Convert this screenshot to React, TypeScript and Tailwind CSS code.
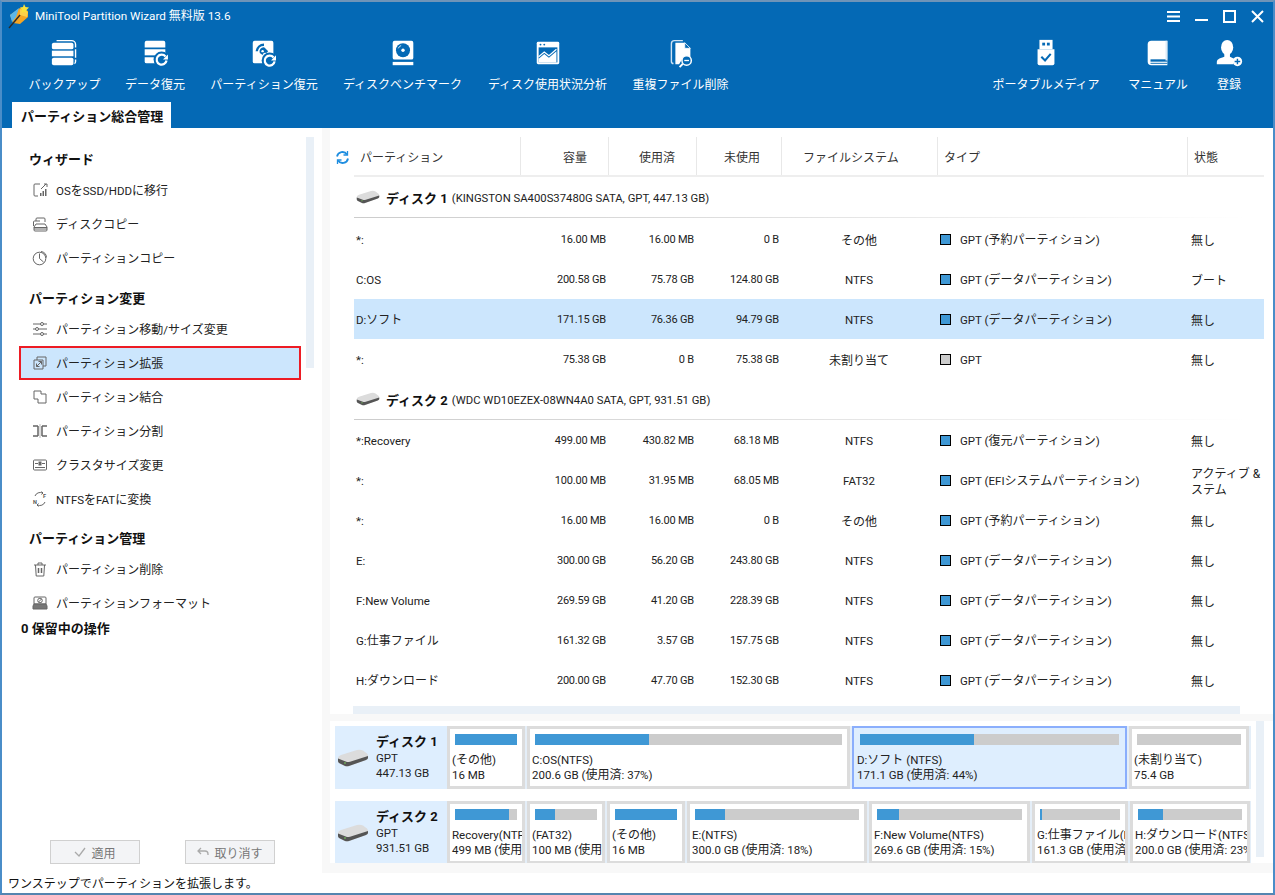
import type { ReactNode } from 'react';

// latin runs render smaller than the kana next to them, same as the app does
function Mixed({ text, latin = 'text-[11.5px]' }: { text: string; latin?: string }) {
  const parts = text.split(/([\x20-\x7e]+)/).filter(Boolean);
  return (
    <>
      {parts.map((p, i) => (/^[\x20-\x7e]+$/.test(p) ? <span key={i} className={latin}>{p}</span> : <span key={i}>{p}</span>))}
    </>
  );
}

function Logo() {
  return (
    <svg width="24" height="26" viewBox="0 0 24 26">
      <path d="M2 12 L12 5 L20 8 L20 14 L12 21 L5 20 Z" fill="#f6a623" />
      <path d="M2 12 L11 5 L8 14 L4 19 Z" fill="#5bb7e8" />
      <path d="M12 6 L20 9 L19 14 L12 12 Z" fill="#fbd04a" />
      <path d="M16 1 L17.500 4 L21 4.500 L18.500 7 L19 10 L16 8.500 L13.500 10 L14 7 L12 4.500 L15 4 Z" fill="#f8e23c" />
      <path d="M1 25 L12 12" stroke="#2a2a2a" strokeWidth="1.400" />
    </svg>
  );
}

const CArc = ({ cx = 22, cy = 23 }: { cx?: number; cy?: number }) => (
  <g transform={`translate(${cx} ${cy})`}>
    <circle r="8.500" fill="#0469b5" />
    <path d="M4.200 -3.200A5.300 5.300 0 1 0 5.300 1" fill="none" stroke="#fff" strokeWidth="2.400" />
    <path d="M6.800 -5.500V0H1.500z" fill="#fff" />
  </g>
);

const toolIcons: Record<string, ReactNode> = {
  backup: (
    <g fill="#fff">
      <rect x="2" y="5" width="23" height="7" rx="2" />
      <rect x="2" y="13.500" width="23" height="6" />
      <rect x="2" y="21" width="23" height="8" rx="2" />
      <path d="M7 2h16a5 5 0 0 1 5 5v3h-1.500V7A3.500 3.500 0 0 0 23 3.500H7zM26.500 12H28v9h-1.500zM26.500 23H28v2a3 3 0 0 1-2 3v-1.500a1.500 1.500 0 0 0 .5-1.500z" />
    </g>
  ),
  data: (
    <g fill="#fff">
      <path d="M7 3h18a2 2 0 0 1 2 2v5H5V5a2 2 0 0 1 2-2z" />
      <rect x="5" y="12" width="22" height="6.500" />
      <path d="M5 20.500h12V27H7a2 2 0 0 1-2-2z" />
      <CArc cx={23} cy={23} />
    </g>
  ),
  part: (
    <g>
      <rect x="4" y="3" width="22" height="24" rx="2" fill="#fff" />
      <path d="M7 14a9 9 0 0 1 9-8v2.500a6.500 6.500 0 0 0-6.500 5.500z" fill="#0469b5" />
      <path d="M11.500 16a4.500 4.500 0 0 1 5-6l4 4-2 2a3 3 0 0 0-4 2z" fill="#0469b5" />
      <circle cx="14.500" cy="14" r="1.300" fill="#fff" />
      <CArc cx={22} cy={24} />
    </g>
  ),
  bench: (
    <g>
      <rect x="5" y="3" width="22" height="20" rx="2" fill="#fff" />
      <circle cx="16" cy="13" r="7.500" fill="#0469b5" />
      <circle cx="16" cy="13" r="1.800" fill="#fff" />
      <path d="M11 11a5.500 5.500 0 0 1 3-3" stroke="#fff" strokeWidth=".9" fill="none" />
      <rect x="5" y="25.500" width="22" height="3.500" fill="#fff" />
    </g>
  ),
  usage: (
    <g>
      <rect x="4" y="4" width="24" height="24" rx="1.500" fill="#fff" />
      <rect x="6" y="10" width="20" height="16" fill="#0469b5" />
      <circle cx="8" cy="7" r="1" fill="#0469b5" />
      <circle cx="12" cy="7" r="1" fill="#0469b5" />
      <path d="M6 22 L12 17 L17 21 L25 14 V26 H6 Z" fill="#fff" />
      <path d="M6 20 L12 15 L17 19 L25 12" fill="none" stroke="#fff" strokeWidth="1.300" />
    </g>
  ),
  dup: (
    <g>
      <path d="M8 28a3 3 0 0 1-3-3V6a4 4 0 0 1 4-4h9v1.500H9A2.500 2.500 0 0 0 6.500 6v19A1.500 1.500 0 0 0 8 26.500z" fill="#cfe3f4" />
      <path d="M10 5h10l6 6v10h-8l-4 7h-4z" fill="#fff" />
      <path d="M20 5v6h6z" fill="#0469b5" stroke="#fff" strokeWidth=".8" />
      <circle cx="22" cy="24" r="5" fill="#0469b5" stroke="#fff" strokeWidth="1.600" />
      <rect x="19.500" y="23.300" width="5" height="1.400" fill="#fff" />
      <path d="M18 27.500 L14.500 31" stroke="#fff" strokeWidth="2" />
    </g>
  ),
  usb: (
    <g>
      <path d="M9 2h14v10H9z" fill="#fff" />
      <rect x="12" y="5" width="3" height="3" fill="#0469b5" />
      <rect x="17" y="5" width="3" height="3" fill="#0469b5" />
      <path d="M7 12h18v15a2 2 0 0 1-2 2H9a2 2 0 0 1-2-2z" fill="#fff" />
      <path d="M11 20l4 4 6-7" fill="none" stroke="#0469b5" strokeWidth="2.200" />
    </g>
  ),
  book: (
    <g>
      <path d="M9 3h17v26H9a4 4 0 0 1-4-4V7a4 4 0 0 1 4-4z" fill="#fff" />
      <path d="M8 24h18" stroke="#0469b5" strokeWidth="2.500" />
      <path d="M8 27h18" stroke="#0469b5" strokeWidth="1" />
      <path d="M24 3h2v21h-2z" fill="#dcebf7" />
    </g>
  ),
  user: (
    <g>
      <ellipse cx="14" cy="10" rx="6.500" ry="8" fill="#fff" />
      <path d="M11 17h6v3l5 2.500a5 5 0 0 0-1 5.500H3v-2c0-3 2-4 8-6z" fill="#fff" />
      <circle cx="25" cy="25" r="5" fill="#fff" />
      <path d="M25 22v6M22 25h6" stroke="#0469b5" strokeWidth="1.500" />
    </g>
  ),
};

function ToolItem({ icon, label, width }: { icon: string; label: string; width: string }) {
  return (
    <div className={`flex flex-col items-center ${width}`}>
      <svg width="30" height="30" viewBox="0 0 32 32" className="shrink-0">{toolIcons[icon]}</svg>
      <span className="mt-[8px] text-[12px] leading-[18px] text-white whitespace-nowrap">{label}</span>
    </div>
  );
}

const sideIcons: Record<string, ReactNode> = {
  migrate: (
    <g>
      <path d="M8 2H3a1 1 0 0 0-1 1v10a1 1 0 0 0 1 1h3M12 2h3v3" />
      <path d="M9 7l5-5" />
      <path d="M8 14v-3h1.500v3zM10.500 14V9H12v5zM13 14V7h1.500v7z" fill="#666" stroke="none" />
    </g>
  ),
  disk: (
    <g>
      <path d="M4 5V3a1 1 0 0 1 1-1h7a1 1 0 0 1 1 1v3" />
      <path d="M1.500 10V6a1 1 0 0 1 1-1H8" />
      <path d="M4 8h9l2 3v3a1 1 0 0 1-1 1H3a1 1 0 0 1-1-1v-3z" />
      <path d="M2 11.500h13M2 13h13" />
    </g>
  ),
  partcopy: (
    <g>
      <circle cx="7.500" cy="8.500" r="6.300" />
      <path d="M7.500 3.500v5l4 3.500" />
      <path d="M9 1.500a6.500 6.500 0 0 1 5.500 6" />
    </g>
  ),
  sliders: (
    <g>
      <path d="M1 3h14M1 8h14M1 13h14" />
      <circle cx="10" cy="3" r="1.500" fill="#fff" />
      <circle cx="5" cy="8" r="1.500" fill="#fff" />
      <circle cx="10" cy="13" r="1.500" fill="#fff" />
    </g>
  ),
  extend: (
    <g>
      <path d="M5 5V2h9v9h-3" />
      <path d="M2 5h9v9H2z" />
      <path d="M4.500 11.500l5-5M6.500 6.500h3v3M4.500 8.500v3h3" />
    </g>
  ),
  merge: <path d="M2 2h7v3h5v9H6v-4H2z" />,
  split: (
    <g>
      <path d="M1 3h5M1 13h5M10 3h5M10 13h5" strokeWidth="1.500" />
      <path d="M6 3v10M10 3v10" strokeWidth="1.500" />
      <path d="M8 1v14" stroke="#bbb" />
    </g>
  ),
  cluster: (
    <g>
      <rect x="1.500" y="3" width="13" height="10" rx="1" />
      <path d="M3 10.500h10" />
      <path d="M3 6.500h3M10 6.500h3" />
      <rect x="7" y="5" width="2" height="3" fill="#666" />
    </g>
  ),
  convert: (
    <g>
      <path d="M3 5a5.500 5.500 0 0 1 7.500-3M13 11a5.500 5.500 0 0 1-7.500 3" />
      <path d="M9.500 .5l1.500 1.500-1.500 1.500M6.500 12.500L5 14l1.500 1.500" />
      <text x="11" y="6.500" fontSize="5.500" fontWeight="700" fill="#555" stroke="none">F</text>
      <text x="1" y="13" fontSize="5.500" fontWeight="700" fill="#555" stroke="none">N</text>
    </g>
  ),
  trash: (
    <g>
      <path d="M2 4h12M6 4V2h4v2M3.500 4l.7 11h7.600l.7-11" />
      <path d="M6.500 7v5M9.500 7v5" strokeWidth="1.500" />
    </g>
  ),
  format: (
    <g>
      <path d="M3 2h10a1 1 0 0 1 1 1v6H2V3a1 1 0 0 1 1-1z" />
      <circle cx="8" cy="5.500" r="2.300" />
      <path d="M6.500 7l3-3" />
      <path d="M2 9L1 11v3h14v-3l-1-2z" fill="#777" />
    </g>
  ),
};

function SideItem({ icon, label, active }: { icon: string; label: string; active?: boolean }) {
  return (
    <div
      className={`flex h-[34px] items-center text-[12px] text-[#222] ${
        active ? 'ml-[17px] mr-[21px] border-2 border-[#ed1c24] bg-[#cce6fd] pl-[11px]' : 'pl-[30px]'
      }`}
    >
      <svg width="16" height="16" viewBox="0 0 16 16" fill="none" stroke="#666" strokeWidth="1" className="mr-[8px] shrink-0">
        {sideIcons[icon]}
      </svg>
      <span className="pt-[2px] whitespace-nowrap"><Mixed text={label} /></span>
    </div>
  );
}

function SideHeading({ children, className = '' }: { children: ReactNode; className?: string }) {
  return <div className={`flex h-[28px] items-center pl-[27px] pt-[1px] text-[13px] font-bold text-[#111] ${className}`}>{children}</div>;
}

function DiskIcon({ width = 24, height = 14 }: { width?: number; height?: number }) {
  return (
    <svg width={width} height={height} viewBox="0 0 32 18" className="shrink-0">
      <path d="M1 9Q1 7 4 6L20 1Q23 .2 26 1.500L30 4.500Q31.500 6 31 8V9Q31 10 29 11L12 17Q10 17.600 8 17L2 14Q1 13 1 12Z" fill="#dcdcdc" />
      <path d="M1 9.500L10 13Q11 13.300 13 12.800L31 7V9Q31 10 29 11L12 17Q10 17.600 8 17L2 14Q1 13 1 12Z" fill="#555" />
      <circle cx="8" cy="14" r=".8" fill="#7ddc5a" />
    </svg>
  );
}

const COLS = 'grid grid-cols-[166px_88px_88px_85px_156px_250px_77px]';
const NUM = 'pr-[2px] text-right text-[11px] tracking-[-0.2px]';

type Row = { name: string; size: string; used: string; free: string; fs: string; type: string; status: ReactNode; selected?: boolean; gray?: boolean };

function TableRow({ row }: { row: Row }) {
  return (
    <div className="flex">
      <div className="w-[24px]" />
      <div className={`${COLS} h-[40px] items-center pt-[3px] text-[12px] text-[#222] ${row.selected ? 'bg-[#cce6fd]' : ''}`}>
        <div className="pl-[2px] whitespace-nowrap"><Mixed text={row.name} /></div>
        <div className={NUM}>{row.size}</div>
        <div className={NUM}>{row.used}</div>
        <div className={NUM}>{row.free}</div>
        <div className="text-center"><Mixed text={row.fs} /></div>
        <div className="flex items-center pl-[3px]">
          <span className={`mb-[3px] mr-[9px] h-[11px] w-[11px] border border-black ${row.gray ? 'bg-[#cccccc]' : 'bg-[#3f98d5]'}`} />
          <span className="whitespace-nowrap"><Mixed text={row.type} /></span>
        </div>
        <div className="pl-[4px] leading-[16px] whitespace-nowrap">{row.status}</div>
      </div>
    </div>
  );
}

function DiskHeader({ n, info }: { n: number; info: string }) {
  return (
    <div className="flex">
      <div className="w-[24px]" />
      <div className="w-[893px]">
        <div className="flex h-[40px] items-center pl-[2px]">
          <DiskIcon />
          <span className="ml-[6px] pt-[4px] text-[13px] font-bold whitespace-nowrap text-[#111]">ディスク {n}</span>
          <span className="ml-[4px] pt-[4px] text-[11.3px] whitespace-nowrap text-[#222]">{info}</span>
        </div>
        <div className="h-px bg-gradient-to-r from-[#cccccc] via-[#e2e2e2] to-transparent" />
      </div>
    </div>
  );
}

const disk1: Row[] = [
  { name: '*:', size: '16.00 MB', used: '16.00 MB', free: '0 B', fs: 'その他', type: 'GPT (予約パーティション)', status: '無し' },
  { name: 'C:OS', size: '200.58 GB', used: '75.78 GB', free: '124.80 GB', fs: 'NTFS', type: 'GPT (データパーティション)', status: 'ブート' },
  { name: 'D:ソフト', size: '171.15 GB', used: '76.36 GB', free: '94.79 GB', fs: 'NTFS', type: 'GPT (データパーティション)', status: '無し', selected: true },
  { name: '*:', size: '75.38 GB', used: '0 B', free: '75.38 GB', fs: '未割り当て', type: 'GPT', status: '無し', gray: true },
];

const disk2: Row[] = [
  { name: '*:Recovery', size: '499.00 MB', used: '430.82 MB', free: '68.18 MB', fs: 'NTFS', type: 'GPT (復元パーティション)', status: '無し' },
  { name: '*:', size: '100.00 MB', used: '31.95 MB', free: '68.05 MB', fs: 'FAT32', type: 'GPT (EFIシステムパーティション)', status: <>アクティブ &amp;<br />ステム</> },
  { name: '*:', size: '16.00 MB', used: '16.00 MB', free: '0 B', fs: 'その他', type: 'GPT (予約パーティション)', status: '無し' },
  { name: 'E:', size: '300.00 GB', used: '56.20 GB', free: '243.80 GB', fs: 'NTFS', type: 'GPT (データパーティション)', status: '無し' },
  { name: 'F:New Volume', size: '269.59 GB', used: '41.20 GB', free: '228.39 GB', fs: 'NTFS', type: 'GPT (データパーティション)', status: '無し' },
  { name: 'G:仕事ファイル', size: '161.32 GB', used: '3.57 GB', free: '157.75 GB', fs: 'NTFS', type: 'GPT (データパーティション)', status: '無し' },
  { name: 'H:ダウンロード', size: '200.00 GB', used: '47.70 GB', free: '152.30 GB', fs: 'NTFS', type: 'GPT (データパーティション)', status: '無し' },
];

function PartBox({ width, pct, line1, line2, selected }: { width: string; pct: number; line1: string; line2: string; selected?: boolean }) {
  return (
    <div
      className={`shrink-0 overflow-hidden ${width} ${
        selected ? 'border-[2px] border-[#8aaefc] bg-[#deeefe] pt-[6px]' : 'border-[3px] border-[#dcdcdc] bg-white pt-[5px]'
      }`}
    >
      <div className={`h-[11px] bg-[#cccccc] ${selected ? 'mx-[6px]' : 'mx-[5px]'}`}>
        <div className="h-full bg-[#3f98d5]" style={{ width: `${pct}%` }} />
      </div>
      <div className={`mt-[8px] text-[12px] leading-[15px] whitespace-nowrap text-[#222] ${selected ? 'pl-[3px]' : 'pl-[2px]'}`}>
        <Mixed text={line1} />
        <br />
        <Mixed text={line2} />
      </div>
    </div>
  );
}

function DiskBlock({ n, size, children, className = '' }: { n: number; size: string; children: ReactNode; className?: string }) {
  return (
    <div className={`flex h-[63px] w-[916px] bg-[#e4eef8] ${className}`}>
      <div className="flex w-[112px] shrink-0 items-center rounded-l-[3px] bg-[#deeefe] pl-[2px]">
        <DiskIcon width={32} height={18} />
        <div className="ml-[7px] text-[11.5px] leading-[15px] whitespace-nowrap text-[#222]">
          <div className="text-[13px] font-bold text-[#111]">ディスク {n}</div>
          <div className="pt-[2px]">GPT</div>
          <div>{size}</div>
        </div>
      </div>
      <div className="flex gap-[2px]">{children}</div>
    </div>
  );
}

function FootButton({ label, icon }: { label: string; icon: ReactNode }) {
  return (
    <div className="flex h-[24px] w-[90px] items-center justify-center gap-[5px] border border-[#d0d0d0] bg-[#f3f4f6] text-[12px] text-[#777]">
      {icon}
      <span className="pt-[3px]">{label}</span>
    </div>
  );
}

const HEAD = 'flex h-full items-center pt-[4px]';

export default function App() {
  return (
    <div className="flex h-[895px] w-[1275px] flex-col overflow-hidden border-x-2 border-t-2 border-b-2 border-x-[#4a8dc8] border-t-[#6f94b8] border-b-[#5585b0] bg-white font-[Roboto,'Noto_Sans_CJK_JP',sans-serif]">
      {/* title bar + toolbar */}
      <header className="flex h-[126px] shrink-0 flex-col bg-[#0469b5]">
        <div className="flex h-[28px] items-center pl-[6px] pr-[9px]">
          <Logo />
          <span className="ml-[3px] text-[12px] text-white whitespace-nowrap">
            <Mixed text="MiniTool Partition Wizard 無料版 13.6" latin="text-[11.7px]" />
          </span>
          <div className="ml-auto flex items-center gap-[15px]">
            <svg width="13" height="13" viewBox="0 0 13 13" stroke="#fff" strokeWidth="2"><path d="M0 2h13M0 6.500h13M0 11h13" /></svg>
            <svg width="13" height="13" viewBox="0 0 13 13" stroke="#fff" strokeWidth="2"><path d="M0 10h13" /></svg>
            <svg width="13" height="13" viewBox="0 0 13 13" stroke="#fff" strokeWidth="2" fill="none"><rect x="1" y="1" width="11" height="11" /></svg>
            <svg width="13" height="13" viewBox="0 0 13 13" stroke="#fff" strokeWidth="2"><path d="M1 1l11 11M12 1L1 12" /></svg>
          </div>
        </div>
        <div className="mt-[8px] flex pl-[27px] pr-[32px]">
          <div className="flex gap-[24px]">
            <ToolItem icon="backup" label="バックアップ" width="w-[71px]" />
            <ToolItem icon="data" label="データ復元" width="w-[62px]" />
            <ToolItem icon="part" label="パーティション復元" width="w-[108px]" />
            <ToolItem icon="bench" label="ディスクベンチマーク" width="w-[121px]" />
            <ToolItem icon="usage" label="ディスク使用状況分析" width="w-[121px]" />
            <ToolItem icon="dup" label="重複ファイル削除" width="w-[97px]" />
          </div>
          <div className="ml-auto flex gap-[28px]">
            <ToolItem icon="usb" label="ポータブルメディア" width="w-[108px]" />
            <ToolItem icon="book" label="マニュアル" width="w-[60px]" />
            <ToolItem icon="user" label="登録" width="w-[24px] ml-[1px]" />
          </div>
        </div>
        <div className="ml-[10px] mt-auto flex h-[26px] w-[159px] items-center bg-white pl-[9px] pt-[3px] text-[13px] font-bold whitespace-nowrap text-[#111]">
          パーティション総合管理
        </div>
      </header>

      <div className="flex min-h-0 flex-1">
        {/* left panel */}
        <aside className="relative flex w-[320px] shrink-0 flex-col pt-[17px]">
          <div className="absolute right-[8px] top-[9px] h-[231px] w-[8px] bg-[#e9f0f7]" />
          <SideHeading>ウィザード</SideHeading>
          <SideItem icon="migrate" label="OSをSSD/HDDに移行" />
          <SideItem icon="disk" label="ディスクコピー" />
          <SideItem icon="partcopy" label="パーティションコピー" />
          <SideHeading className="mt-[9px]">パーティション変更</SideHeading>
          <SideItem icon="sliders" label="パーティション移動/サイズ変更" />
          <SideItem icon="extend" label="パーティション拡張" active />
          <SideItem icon="merge" label="パーティション結合" />
          <SideItem icon="split" label="パーティション分割" />
          <SideItem icon="cluster" label="クラスタサイズ変更" />
          <SideItem icon="convert" label="NTFSをFATに変換" />
          <SideHeading className="mt-[8px]">パーティション管理</SideHeading>
          <SideItem icon="trash" label="パーティション削除" />
          <SideItem icon="format" label="パーティションフォーマット" />
          <div className="flex h-[18px] items-center pl-[19px] text-[13px] font-bold text-[#111]">0 保留中の操作</div>
          <div className="mt-auto mb-[9px] flex gap-[45px] pl-[48px]">
            <FootButton
              label="適用"
              icon={<svg width="12" height="12" viewBox="0 0 12 12" fill="none" stroke="#aaa" strokeWidth="1.300"><path d="M1 6l4 4 6-8" /></svg>}
            />
            <FootButton
              label="取り消す"
              icon={<svg width="12" height="12" viewBox="0 0 12 12" fill="none" stroke="#aaa" strokeWidth="1.300"><path d="M4 2L1 5l3 3M1 5h7a3 3 0 0 1 3 3v1" /></svg>}
            />
          </div>
        </aside>

        <div className="w-[8px] shrink-0 bg-[#f8f8f8]" />

        {/* right panel */}
        <main className="flex min-w-0 flex-1 flex-col">
          <div className="h-[586px] shrink-0 overflow-hidden pt-[9px]">
            <div className="flex">
              <div className="flex w-[24px] items-center pl-[5px]">
                <svg width="15" height="15" viewBox="0 0 15 15" fill="none" stroke="#1f8ee0" strokeWidth="1.800">
                  <path d="M2 6.500A5.500 5.500 0 0 1 12 4.500M13 8.500A5.500 5.500 0 0 1 3 10.500" />
                  <path d="M12.500 1v4h-4M2.500 14v-4h4" strokeWidth="1.300" />
                </svg>
              </div>
              <div className={`${COLS} h-[40px] items-center border-b-2 border-[#eeeeee] text-[12px] text-[#333]`}>
                <div className={`${HEAD} pl-[6px]`}>パーティション</div>
                <div className={`${HEAD} justify-end border-l border-[#e8e8e8] pr-[21px]`}>容量</div>
                <div className={`${HEAD} justify-end border-l border-[#e8e8e8] pr-[21px]`}>使用済</div>
                <div className={`${HEAD} justify-end border-l border-[#e8e8e8] pr-[21px]`}>未使用</div>
                <div className={`${HEAD} border-l border-[#e8e8e8] pl-[21px]`}>ファイルシステム</div>
                <div className={`${HEAD} border-l border-[#e8e8e8] pl-[6px]`}>タイプ</div>
                <div className={`${HEAD} border-l border-[#e8e8e8] pl-[6px]`}>状態</div>
              </div>
            </div>
            <DiskHeader n={1} info="(KINGSTON SA400S37480G SATA, GPT, 447.13 GB)" />
            <div className="h-px" />
            {disk1.map((r, i) => <TableRow key={i} row={r} />)}
            <DiskHeader n={2} info="(WDC WD10EZEX-08WN4A0 SATA, GPT, 931.51 GB)" />
            {disk2.map((r, i) => <TableRow key={i} row={r} />)}
            <div className="ml-[23px] mt-[6px] h-[8px] w-[887px] bg-[#e9f0f7]" />
          </div>

          <div className="h-[7px] shrink-0 bg-[#f8f8f8]" />

          <div className="relative flex-1 pl-[5px] pt-[5px]">
            <div className="absolute right-[9px] top-0 h-[136px] w-[8px] bg-[#e9f0f7]" />
            <DiskBlock n={1} size="447.13 GB">
              <PartBox width="w-[78px]" pct={100} line1="(その他)" line2="16 MB" />
              <PartBox width="w-[323px]" pct={37} line1="C:OS(NTFS)" line2="200.6 GB (使用済: 37%)" />
              <PartBox width="w-[275px]" pct={44} line1="D:ソフト (NTFS)" line2="171.1 GB (使用済: 44%)" selected />
              <PartBox width="w-[120px]" pct={0} line1="(未割り当て)" line2="75.4 GB" />
            </DiskBlock>
            <DiskBlock n={2} size="931.51 GB" className="mt-[12px]">
              <PartBox width="w-[78px]" pct={87} line1="Recovery(NTFS)" line2="499 MB (使用済: 86%)" />
              <PartBox width="w-[78px]" pct={32} line1="(FAT32)" line2="100 MB (使用済: 32%)" />
              <PartBox width="w-[78px]" pct={100} line1="(その他)" line2="16 MB" />
              <PartBox width="w-[180px]" pct={18} line1="E:(NTFS)" line2="300.0 GB (使用済: 18%)" />
              <PartBox width="w-[161px]" pct={15} line1="F:New Volume(NTFS)" line2="269.6 GB (使用済: 15%)" />
              <PartBox width="w-[96px]" pct={2} line1="G:仕事ファイル(NTFS)" line2="161.3 GB (使用済: 2%)" />
              <PartBox width="w-[120px]" pct={24} line1="H:ダウンロード(NTFS)" line2="200.0 GB (使用済: 23%)" />
            </DiskBlock>
            <div className="absolute inset-x-0 bottom-0 h-[10px] bg-[#f8f8f8]" />
          </div>
        </main>
      </div>

      <footer className="flex h-[20px] shrink-0 items-center pl-[6px] pt-[2px] text-[12px] text-[#111]">ワンステップでパーティションを拡張します。</footer>
    </div>
  );
}
